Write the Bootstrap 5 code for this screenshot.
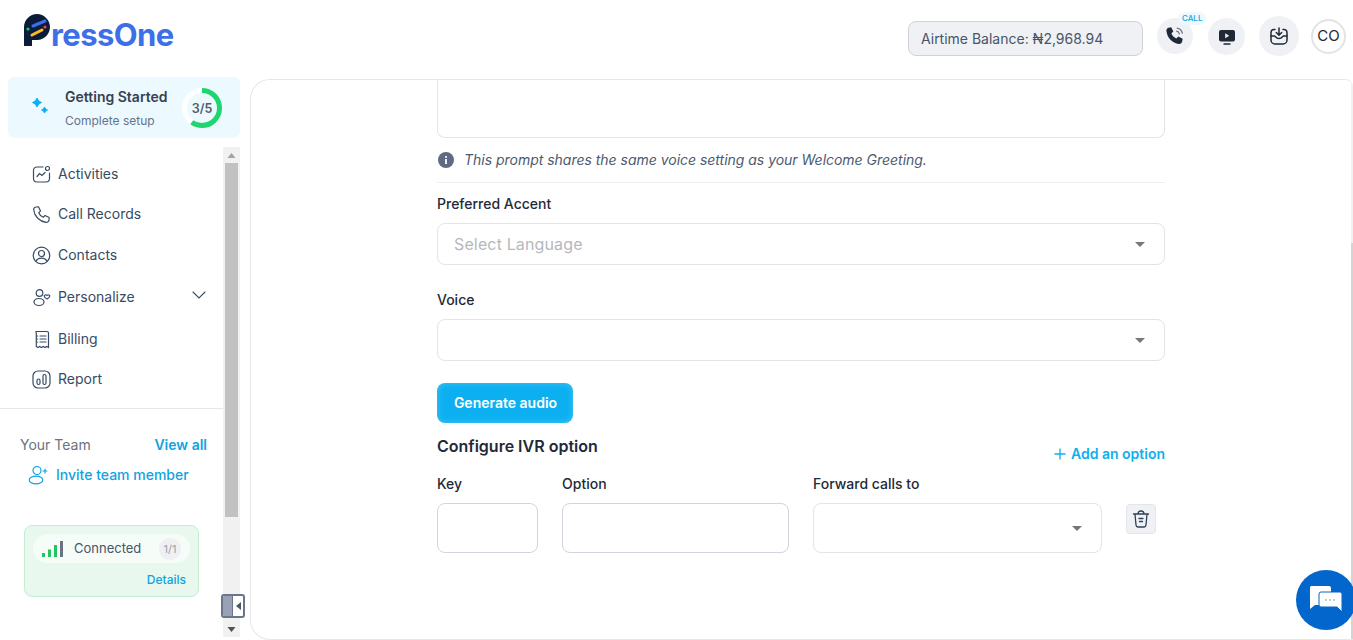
<!DOCTYPE html>
<html lang="en">
<head>
<meta charset="utf-8">
<title>PressOne</title>
<link href="https://cdn.jsdelivr.net/npm/bootstrap@5.3.0/dist/css/bootstrap.min.css" rel="stylesheet">
<style>
html,body{height:640px;overflow:hidden;background:#fff;}
body{font-family:Inter,"Liberation Sans",sans-serif;color:#1f2937;position:relative;}
.app-top{height:79px;}
.brand{margin:14px 0 0 24px;height:44px;align-items:flex-start;}
.brand-mark{width:26px;height:32px;flex:none;}
.brand-text{font-size:31px;font-weight:700;color:#3d6fe8;line-height:44px;letter-spacing:-.6px;margin-left:1px;margin-top:-1px;}
.top-tools{margin-top:21px;padding-right:7px;}
.balance{width:235px;height:35px;background:#f0f1f5;border:1px solid #cfd2da;border-radius:8px;font-size:14px;color:#475569;padding:0 12px;margin-right:14px;line-height:33px;}
.round-tool{background:#f0f1f5;border-radius:50%;flex:none;}
.call-chip{position:absolute;top:-6px;left:21px;font-size:8px;font-weight:500;color:#0ea5e0;background:#ecf9ff;border-radius:8px;padding:0 4px;line-height:13px;}
.avatar-chip{width:35px;height:35px;border:2px solid #e3e3e6;border-radius:50%;font-size:15px;color:#1f2937;background:#fff;}
.app-body{height:561px;}
.side{width:250px;flex:none;position:relative;}
.start-card{margin:-2px 0 0 8px;width:232px;height:61px;background:#ecf9ff;border-radius:6px;padding-left:22px;}
.start-title{font-size:14px;font-weight:600;color:#374151;line-height:18px;}
.start-sub{font-size:12px;color:#64748b;line-height:18px;margin-top:6px;}
.side-scroll{margin-top:9px;height:490px;width:240px;}
.side-inner{width:223px;flex:none;}
.fake-bar{width:17px;flex:none;background:#f1f1f1;}
.bar-arrow{height:16px;}
.bar-thumb{height:354px;background:#c1c1c1;margin:0 2px;}
.bar-fill{flex:1 1 auto;}
.menu-row{font-size:14px;color:#374b63;padding-left:32px;line-height:20px;align-items:center;}
.menu-row svg{flex:none;margin-right:7px;}
.team-head{font-size:14px;padding:0 16px 0 20px;line-height:20px;}
.team-invite{font-size:14px;color:#10a3e0;font-weight:500;padding-left:28px;line-height:20px;margin-top:10px;}
.conn-card{margin:40px 0 0 24px;width:175px;height:72px;background:#e9f8ee;border:1px solid #c5edd2;border-radius:8px;padding:8px;}
.conn-pill{height:29px;background:#f6fcf8;border-radius:15px;font-size:13px;color:#475569;padding:0 9px;}
.conn-count{font-size:11px;color:#9a9fab;background:#eff0f3;border-radius:50%;width:22px;height:22px;line-height:22px;text-align:center;margin-left:auto;margin-right:0;}
.conn-link{font-size:12px;color:#10a3e0;font-weight:500;text-align:right;margin-top:9px;padding-right:4px;line-height:16px;}
.collapse-tab{position:absolute;left:221px;top:515px;width:24px;height:24px;border:2px solid #6b7488;border-radius:3px;background:#fff;overflow:hidden;}
.collapse-tab span{display:block;width:10px;height:100%;background:#98a1b5;border-right:1px solid #6b7488;}
.main-panel{flex:1 1 auto;border:1px solid #e5e7eb;border-right:0;border-radius:20px 8px 0 20px;height:561px;overflow:hidden;position:relative;}
.main-track{position:absolute;right:0;top:0;bottom:0;width:2px;background:#f1f1f1;}
.main-thumb{position:absolute;right:0;top:163px;bottom:0;width:2px;background:#d4d4d4;}
.form-col{width:728px;margin-left:186px;}
.prompt-box{height:58px;border:1px solid #e2e4e9;border-top:0;border-radius:0 0 8px 8px;}
.hint-row{font-size:14px;font-style:italic;color:#4b5a70;height:45px;border-bottom:1px solid #eef0f3;padding:0 0 1px 1px;letter-spacing:-.02px;}
.field-label{font-size:14px;font-weight:500;color:#1f2937;line-height:20px;display:block;}
.pick-box{height:42px;border:1px solid #e2e4e9;border-radius:8px;padding:0 16px;font-size:16px;color:#b5b8bd;letter-spacing:.14px;}
.pick-arrow{width:0;height:0;border-left:5px solid transparent;border-right:5px solid transparent;border-top:5px solid #777;margin-left:auto;margin-right:3px;}
.gen-btn{width:136px;height:40px;background:#0cb0f0;box-shadow:inset 0 0 6px rgba(255,255,255,.25);border:0;border-radius:8px;color:#fff;font-size:14px;font-weight:600;padding:0 0 2px 1px;}
.gen-btn:hover{background:#0cb0f0;color:#fff;}
.ivr-title{font-size:16px;font-weight:600;color:#1f2937;line-height:22px;margin:0;}
.add-link{font-size:14px;font-weight:600;color:#0cb0f0;line-height:20px;}
.cell-key{width:101px;flex:none;}
.cell-opt{width:227px;flex:none;}
.cell-fwd{width:289px;flex:none;}
.plain-input{height:50px;border:1px solid #d2d4de;border-radius:8px;background:#fff;}
.trash-box{width:30px;height:30px;background:#f0f1f5;border:1px solid #e3e5ea;border-radius:4px;flex:none;margin-left:24px;margin-top:30px;}
.chat-fab{position:absolute;left:1296px;top:570px;width:60px;height:60px;border-radius:50%;background:#0266cc;}
</style>
</head>
<body>
<header class="app-top d-flex justify-content-between">
  <div class="brand d-flex">
    <svg class="brand-mark" viewBox="0 0 26 32"><path d="M0 32V13C0 6 6 0 13 0s13 6 13 13-6 13-13 13H8v6z" fill="#0b1b3a"/><path d="M9 12 21 7" stroke="#3d6fe8" stroke-width="3" stroke-linecap="round"/><path d="M8 21l10-5" stroke="#fbbc1c" stroke-width="3" stroke-linecap="round"/><circle cx="4" cy="15" r="1.600" fill="#22c55e"/><circle cx="21" cy="13" r="1.600" fill="#ef4444"/></svg>
    <span class="brand-text">ressOne</span>
  </div>
  <div class="top-tools d-flex align-items-start">
    <div class="balance">Airtime Balance: ₦2,968.94</div>
    <div class="round-tool position-relative d-flex align-items-center justify-content-center" style="width:36px;height:36px;margin-top:-3px">
      <svg width="22" height="22" viewBox="0 0 20 20" fill="none"><path d="M4 2.500 6.500 2l2 4-1.800 1.800c.8 2 2.500 3.700 4.500 4.500L13 10.500l4 2-.5 2.500c-.3 1.500-1.500 2.500-3 2.300C7.500 16.500 3 12 2.200 5.500 2 4 2.800 3 4 2.500z" fill="#1f2937"/><path d="M11.500 5.500c1.300.3 2.200 1.200 2.500 2.500M12 2.800c2.500.5 4.100 2.100 4.700 4.700" stroke="#6b7280" stroke-width="1.100" stroke-linecap="round"/></svg>
      <span class="call-chip">CALL</span>
    </div>
    <div class="round-tool d-flex align-items-center justify-content-center" style="width:37px;height:37px;margin:-3px 0 0 15px">
      <svg width="18" height="18" viewBox="0 0 18 18"><rect x="1" y="2" width="16" height="11.500" rx="2" fill="#1f2937"/><path d="M7.200 5.300v5l4-2.500z" fill="#f0f1f5"/><path d="M6 16h6" stroke="#1f2937" stroke-width="1.400" stroke-linecap="round"/></svg>
    </div>
    <div class="round-tool d-flex align-items-center justify-content-center" style="width:40px;height:40px;margin:-5px 0 0 14px">
      <svg width="20" height="20" viewBox="0 0 20 20" fill="none" stroke="#1f2937" stroke-width="1.500" stroke-linecap="round" stroke-linejoin="round"><path d="M6 3.500H5a3 3 0 0 0-3 3V14a4 4 0 0 0 4 4h8a4 4 0 0 0 4-4V6.500a3 3 0 0 0-3-3h-1"/><path d="M2 10h3.500c1 0 1.300 2.500 4.500 2.500s3.500-2.500 4.500-2.500H18"/><path d="M10 2v7M7.300 6.500 10 9.200l2.700-2.700"/></svg>
    </div>
    <div class="avatar-chip d-flex align-items-center justify-content-center" style="margin:-2px 0 0 12px">CO</div>
  </div>
</header>

<div class="app-body d-flex">
  <aside class="side">
    <div class="start-card d-flex align-items-center">
      <svg width="18" height="18" viewBox="0 0 18 18" fill="#0cb0f0" stroke="#0cb0f0" stroke-width=".9" stroke-linejoin="round" class="flex-none" style="margin:-3px 0 0 1px"><path d="M6 1Q7 4.400 10.500 5.500 7 6.600 6 10 5 6.600 1.500 5.500 5 4.400 6 1z"/><path d="M13.500 10Q14.100 12 16.500 13 14.100 14 13.500 16 12.900 14 10.500 13 12.900 12 13.500 10z"/></svg>
      <div style="margin:2px 0 0 16px;width:118px">
        <div class="start-title">Getting Started</div>
        <div class="start-sub">Complete setup</div>
      </div>
      <svg width="40" height="40" viewBox="0 0 40 40" class="flex-none" style="margin-left:-1px"><circle cx="20" cy="20" r="17.500" fill="none" stroke="#fff" stroke-width="5"/><circle cx="20" cy="20" r="17.500" fill="none" stroke="#1ed56f" stroke-width="5" pathLength="100" stroke-dasharray="60 100" transform="rotate(-90 20 20)"/><text x="20" y="24.500" text-anchor="middle" font-size="12.500" font-weight="600" fill="#555b66" font-family="Inter,sans-serif">3/5</text></svg>
    </div>
    <div class="side-scroll d-flex">
      <div class="side-inner">
        <nav style="height:262px;border-bottom:1px solid #e5e7eb;padding-top:17px">
          <div class="menu-row d-flex" style="height:20px">
            <svg width="19" height="19" viewBox="0 0 19 19" fill="none" stroke="#374b63" stroke-width="1.200" stroke-linecap="round"><path d="M11 2H5a3.500 3.500 0 0 0-3.500 3.500v8A3.500 3.500 0 0 0 5 17h9a3.500 3.500 0 0 0 3.500-3.500V8"/><circle cx="15.500" cy="3.500" r="2"/><path d="M5 11.500 7.500 8.500 10 10.500 13 7.500"/></svg>Activities</div>
          <div class="menu-row d-flex" style="height:20px;margin-top:20px">
            <svg width="19" height="19" viewBox="0 0 19 19" fill="none" stroke="#374b63" stroke-width="1.200" stroke-linejoin="round"><path d="M4 2 6.500 1.800l2 4.200L6.700 7.800c.9 2.200 2.300 3.600 4.500 4.500l1.800-1.800 4.200 2L17 15c-.2 1.500-1.500 2.500-3 2.300C7.500 16.500 2.500 11.500 1.700 5 1.500 3.500 2.500 2.200 4 2z"/></svg>Call Records</div>
          <div class="menu-row d-flex" style="height:20px;margin-top:21px">
            <svg width="19" height="19" viewBox="0 0 19 19" fill="none" stroke="#374b63" stroke-width="1.200"><circle cx="9.500" cy="9.500" r="8.300"/><circle cx="9.500" cy="7.500" r="3"/><path d="M4 15.500c1-2.500 3-3.300 5.500-3.300s4.500.8 5.500 3.300"/></svg>Contacts</div>
          <div class="menu-row d-flex" style="height:20px;margin-top:22px">
            <svg width="19" height="19" viewBox="0 0 19 19" fill="none" stroke="#374b63" stroke-width="1.200"><circle cx="7.500" cy="5" r="3.300"/><ellipse cx="7" cy="14" rx="5" ry="3.500"/><path d="M15 11c-1.500-.8-2.800-1.500-2.800-3 0-1 1.800-1.500 2.800-.6 1-.9 2.800-.4 2.800.6 0 1.500-1.300 2.200-2.800 3z"/></svg>Personalize
            <svg width="14" height="8" viewBox="0 0 14 8" fill="none" stroke="#374b63" stroke-width="1.100" stroke-linecap="round" style="margin:-5px 17px 0 auto"><path d="M1 1l6 6 6-6"/></svg></div>
          <div class="menu-row d-flex" style="height:20px;margin-top:22px">
            <svg width="19" height="19" viewBox="0 0 19 19" fill="none" stroke="#374b63" stroke-width="1.200" stroke-linecap="round"><path d="M4 1.500h11A1.500 1.500 0 0 1 16.500 3v14.500l-1.700-1-1.700 1-1.800-1-1.800 1-1.800-1-1.700 1-1.700-1V3A1.500 1.500 0 0 1 4 1.500z"/><path d="M8 6h6M8 9h6M8 12h6M5.300 6h.3M5.300 9h.3M5.300 12h.3"/></svg>Billing</div>
          <div class="menu-row d-flex" style="height:20px;margin-top:20px">
            <svg width="19" height="19" viewBox="0 0 19 19" fill="none" stroke="#374b63" stroke-width="1.200"><rect x="1" y="1" width="17" height="17" rx="5"/><rect x="5" y="9" width="3" height="5.500" rx="1.500"/><rect x="11" y="4.500" width="3" height="10" rx="1.500"/></svg>Report</div>
        </nav>
        <div class="team-head d-flex justify-content-between" style="margin-top:26px">
          <span style="color:#6b7280">Your Team</span><a href="#" class="text-decoration-none fw-semibold" style="color:#10a3e0;font-size:14px">View all</a>
        </div>
        <div class="team-invite d-flex align-items-center">
          <svg width="20" height="20" viewBox="0 0 20 20" fill="none" stroke="#10a3e0" stroke-width="1.200" class="flex-none" style="margin-right:8px"><circle cx="9" cy="5.500" r="4"/><ellipse cx="8" cy="15" rx="6.800" ry="3.800"/><path d="M15 6h4M17 4v4" stroke-linecap="round"/></svg>Invite team member</div>
        <div class="conn-card">
          <div class="conn-pill d-flex align-items-center">
            <svg width="21" height="16" viewBox="0 0 21 16" class="flex-none" style="margin-right:11px"><rect x="0" y="12" width="3" height="4" fill="#22c55e"/><rect x="6" y="8.500" width="3" height="7.500" fill="#22c55e"/><rect x="12" y="4" width="3" height="12" fill="#22c55e"/><rect x="18" y="0" width="3" height="16" fill="#6b7280"/></svg>
            Connected<span class="conn-count">1/1</span></div>
          <div class="conn-link">Details</div>
        </div>
      </div>
      <div class="fake-bar d-flex flex-column">
        <div class="bar-arrow d-flex align-items-center justify-content-center"><svg width="9" height="5" viewBox="0 0 9 5"><path d="M.5 5h8L4.500 0z" fill="#a3a3a3"/></svg></div>
        <div class="bar-thumb"></div>
        <div class="bar-fill"></div>
        <div class="bar-arrow d-flex align-items-center justify-content-center"><svg width="9" height="5" viewBox="0 0 9 5"><path d="M.5 0h8L4.500 5z" fill="#505050"/></svg></div>
      </div>
    </div>
    <div class="collapse-tab d-flex"><span></span><svg width="8" height="10" viewBox="0 0 8 10" style="margin:5px 0 0 2px"><path d="M6 1v8L1 5z" fill="#4b5563"/></svg></div>
  </aside>

  <main class="main-panel">
    <div class="main-track"></div>
    <div class="main-thumb"></div>
    <div class="form-col">
      <div class="prompt-box"></div>
      <div class="hint-row d-flex align-items-center">
        <svg width="16" height="16" viewBox="0 0 16 16" class="flex-none" style="margin-right:10px"><circle cx="8" cy="8" r="8" fill="#5f6b82"/><rect x="7.100" y="7" width="1.800" height="5" fill="#fff"/><rect x="7.100" y="4" width="1.800" height="1.800" fill="#fff"/></svg>
        This prompt shares the same voice setting as your Welcome Greeting.</div>
      <label class="field-label" style="margin-top:11px">Preferred Accent</label>
      <div class="pick-box d-flex align-items-center" style="margin-top:9px">Select Language<span class="pick-arrow"></span></div>
      <label class="field-label" style="margin-top:25px">Voice</label>
      <div class="pick-box d-flex align-items-center" style="margin-top:9px"><span class="pick-arrow"></span></div>
      <button type="button" class="btn gen-btn d-block" style="margin-top:22px">Generate audio</button>
      <div class="d-flex justify-content-between" style="margin-top:12px">
        <h3 class="ivr-title">Configure IVR option</h3>
        <a href="#" class="add-link text-decoration-none d-flex align-items-center" style="margin-top:9px"><svg width="12" height="12" viewBox="0 0 12 12" stroke="#0cb0f0" stroke-width="1.300" style="margin-right:5px"><path d="M6 .5v11M.5 6h11"/></svg>Add an option</a>
      </div>
      <div class="d-flex" style="margin-top:10px">
        <div class="cell-key"><label class="field-label">Key</label><div class="plain-input" style="margin-top:9px"></div></div>
        <div class="cell-opt" style="margin-left:24px"><label class="field-label">Option</label><div class="plain-input" style="margin-top:9px"></div></div>
        <div class="cell-fwd" style="margin-left:24px"><label class="field-label">Forward calls to</label><div class="pick-box d-flex align-items-center" style="margin-top:9px;height:50px"><span class="pick-arrow"></span></div></div>
        <div class="trash-box d-flex align-items-center justify-content-center">
          <svg width="18" height="20" viewBox="0 0 18 20" fill="none" stroke="#2f3f57" stroke-width="1.300" stroke-linecap="round"><path d="M1.500 5h15M6 5c0-2 1-3 3-3s3 1 3 3M3 5l1 11c.1 1.300 1 2 2 2h6c1 0 1.900-.7 2-2l1-11M7 9.500h4M7.500 12.500h3"/></svg>
        </div>
      </div>
    </div>
  </main>
</div>
<div class="chat-fab d-flex align-items-center justify-content-center" aria-label="Chat">
  <svg width="34" height="30" viewBox="0 0 34 30" style="margin-right:3px"><path d="M3 1h18a2 2 0 0 1 2 2v15a2 2 0 0 1-2 2H7l-5 4V3a2 2 0 0 1 1-2z" fill="#fff"/><path d="M13 7h19a2 2 0 0 1 2 2v18l-5-5H13a2 2 0 0 1-2-2V9a2 2 0 0 1 2-2z" fill="#fff" stroke="#0266cc" stroke-width="1"/><circle cx="18" cy="15" r=".9" fill="#8fb8e8"/><circle cx="22" cy="15" r=".9" fill="#8fb8e8"/><circle cx="26" cy="15" r=".9" fill="#8fb8e8"/></svg>
</div>
</body>
</html>
